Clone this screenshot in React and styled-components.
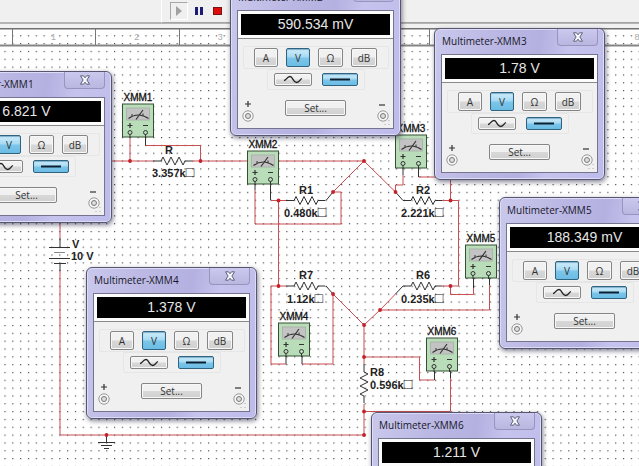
import React from "react";
import styled, { createGlobalStyle, css } from "styled-components";

const GlobalStyle = createGlobalStyle`
  * { box-sizing: border-box; }
  body { margin: 0; font-family: "Open Sans", "Noto Sans", sans-serif; background: #fff; }
`;

const Page = styled.div`
  position: relative;
  display: flex;
  flex-direction: column;
  height: 100vh;
  overflow: hidden;
`;

const Toolbar = styled.header`
  display: flex;
  height: 28px;
  flex: none;
  padding-left: 161px;
  background: linear-gradient(#f0f0f0 22px, #b4b4b4 22px, #b4b4b4 24px, #f1f1f1 24px);
`;

const RunControls = styled.div`
  display: flex;
  flex: 1;
  align-items: flex-start;
  gap: 4px;
  height: 23px;
  padding: 2px 8px;
  border-left: 1px solid #fff;
  border-bottom: 1px solid #a5a5a5;
`;

const ToolButton = styled.button`
  display: grid;
  place-items: center;
  width: ${(p) => (p.$wide ? 18 : 14)}px;
  height: 18px;
  padding: 0;
  border: 1px solid transparent;
  background: none;
  ${(p) => p.$wide && css`border-color: #a8a8a8 #fff #fff #a8a8a8;`}
`;

const Sheet = styled.main`
  position: relative;
  flex: 1;
  min-height: 0;
`;

const Drawing = styled.svg`
  display: block;
  width: 100%;
  height: 100%;
  font-family: "Liberation Sans", Arial, sans-serif;
`;

const ValueText = styled.text`
  font-size: 11px;
  font-weight: 700;
  fill: #222;
`;

const UnitBox = styled.tspan`
  font-size: 14px;
  font-weight: 400;
`;

const InstrumentText = styled.text`
  font-size: 10px;
  fill: #111;
  stroke: #111;
  stroke-width: 0.3;
`;

const RulerText = styled.text`
  font-size: 9px;
  fill: #aaa;
  text-anchor: middle;
`;

const Window = styled.section`
  position: absolute;
  left: ${(p) => p.$x}px;
  top: ${(p) => p.$y}px;
  width: 171px;
  padding: 0 6px 6px;
  border: 1px solid #565670;
  border-radius: 6px;
  background: linear-gradient(100deg, #c9c8ec 0%, #bcb8e4 30%, #b4b0e0 55%, #c6c3ee 70%, #bdbbea 100%);
  box-shadow: inset 0 0 0 1px #dcdcf6, 1px 2px 5px rgba(30, 30, 60, 0.55);
`;

const TitleBar = styled.header`
  display: flex;
  justify-content: space-between;
  height: 25px;
`;

const Title = styled.h2`
  margin: 0;
  padding: 4px 0 0 1px;
  font-size: 10px;
  line-height: 16px;
  font-weight: 400;
  color: #181828;
  white-space: nowrap;
`;

const CloseButton = styled.button`
  display: grid;
  place-items: center;
  width: 41px;
  height: 17px;
  padding: 0;
  border: 1px solid #9794bd;
  border-top: 0;
  border-radius: 0 0 4px 4px;
  background: linear-gradient(#cbc9ee, #b9b6e0);
`;

const Panel = styled.div`
  border: 1px solid #74748e;
  background: #f0f0f0;
`;

const Readout = styled.output`
  display: block;
  border: 3px solid #fcfcfc;
  box-shadow: 0 1px #8a8a8a;
  background: #000;
  color: #e6e6e6;
  font: 14px/21px "Liberation Sans", Arial, sans-serif;
  text-align: center;
`;

const Group = styled.div`
  display: flex;
  width: ${(p) => p.$width}px;
  height: ${(p) => p.$height}px;
  margin: ${(p) => p.$top}px auto 0;
  align-items: center;
  justify-content: center;
  gap: ${(p) => p.$gap}px;
  border: 1px solid #e6e6e6;
  border-radius: 2px;
`;

const Push = styled.button`
  display: grid;
  place-items: center;
  width: ${(p) => p.$width}px;
  height: ${(p) => p.$height}px;
  padding: 0;
  border: 1px solid #858585;
  border-radius: 2px;
  box-shadow: inset 0 0 0 1px #f8f8f8;
  background: linear-gradient(#f1f1f1 48%, #d8d8d8 52%, #d0d0d0);
  color: #333;
  font: 10px/12px "Open Sans", "Noto Sans", sans-serif;
  ${(p) =>
    p.$on &&
    css`
      border-color: #2f6380;
      box-shadow: inset 0 1px 1px #7eb0cb;
      background: linear-gradient(#d0ecfa, #a5daf3 48%, #7cc6ea 52%, #6bbce4);
    `}
`;

const Footer = styled.footer`
  display: flex;
  justify-content: space-between;
  align-items: flex-start;
  height: 38px;
  padding: 8px 3px 0;
`;

const SetSlot = styled.div`
  padding-top: 2px;
`;

const Jack = styled.svg`
  display: block;
  width: 14px;
  height: 28px;
`;

const READINGS = [
  { id: 1, x: -59, y: 71, value: "6.821 V" },
  { id: 2, x: 230, y: -16, value: "590.534 mV" },
  { id: 3, x: 434, y: 28, value: "1.78 V" },
  { id: 4, x: 86, y: 267, value: "1.378 V" },
  { id: 5, x: 499, y: 197, value: "188.349 mV" },
  { id: 6, x: 371, y: 412, value: "1.211 V" },
];

function Terminal({ sign }) {
  return (
    <Jack viewBox="0 0 14 28" aria-label={sign === "+" ? "Positive" : "Negative"}>
      <path d={sign === "+" ? "M4 6h6M7 3v6" : "M3 7h6"} stroke="#333" strokeWidth="1.2" />
      <circle cx="7" cy="18" r="5.2" fill="#f6f6f6" stroke="#999" />
      <circle cx="7" cy="18" r="2.5" fill="#ddd" stroke="#777" />
      {sign === "-" && <path d="M13 22v1M13 26v1M9 26v1" stroke="#aaa" />}
    </Jack>
  );
}

function Multimeter({ id, x, y, value }) {
  return (
    <Window $x={x} $y={y} aria-label={`Multimeter-XMM${id}`}>
      <TitleBar>
        <Title>Multimeter-XMM{id}</Title>
        <CloseButton aria-label="Close">
          <svg width="12" height="10" viewBox="0 0 12 10">
            <path d="M1.5 .8h3L6 2.8 7.500 .8h3L7.900 5l2.600 4.200h-3L6 7.200 4.500 9.200h-3L4.100 5z" fill="#f7f7ff" stroke="#606078" />
          </svg>
        </CloseButton>
      </TitleBar>
      <Panel>
        <Readout>{value}</Readout>
        <Group $width={146} $height={23} $top={8} $gap={8}>
          <Push $width={24} $height={19}>A</Push>
          <Push $width={24} $height={19} $on aria-pressed="true">V</Push>
          <Push $width={25} $height={19}>Ω</Push>
          <Push $width={26} $height={19}>dB</Push>
        </Group>
        <Group $width={98} $height={21} $top={0} $gap={10}>
          <Push $width={38} $height={13} aria-label="AC">
            <svg width="20" height="9" viewBox="0 0 20 9">
              <path d="M1 5.500C3 5.500 4 1.500 7 1.500S10 7.500 13.500 7.500 16.500 4.500 19 3.500" fill="none" stroke="#222" strokeWidth="1.300" />
            </svg>
          </Push>
          <Push $width={36} $height={13} $on aria-label="DC" aria-pressed="true">
            <svg width="20" height="5" viewBox="0 0 20 5">
              <path d="M0 2.500h20" stroke="#0c2030" strokeWidth="2" />
            </svg>
          </Push>
        </Group>
        <Footer>
          <Terminal sign="+" />
          <SetSlot>
            <Push $width={61} $height={16}>Set...</Push>
          </SetSlot>
          <Terminal sign="-" />
        </Footer>
      </Panel>
    </Window>
  );
}

const PITCH = 7.83;
const TICK = 83.35;

const METERS = [
  [122.5, 104], [247.5, 151], [395.5, 135], [278.5, 323], [465.5, 245], [426.5, 338],
];

const WIRES = [
  "M112 161H153M192 161H364L333 192",
  "M130 138V161M145.500 145.500H200.500V161",
  "M333 192H341V224H255V190M270.500 200.500H286M278.500 200.500V286",
  "M286 286H271V364H286M302 364H333V294L364 325",
  "M364 161L395.500 192V185H403V175M418.500 177H450.500V200.500",
  "M442 200.500H458.500V286H442M450.500 286V294.500H473.500V288M489.500 285V310H380L364 325V364",
  "M380 310L395.500 294M364 357H419.500V380H434.500M364 404V435H60V271M364 411.500H450.500V378",
  "M60 218V238",
];

const LEADS = [
  "M145.500 134V145.500M255 182V190M270.500 182V200M286 354V364M302 354V364",
  "M403 166V175M418.500 166V177M473.500 276V288M489.500 276V285M434.500 369V380M450.500 369V378",
  "M326 200.500L333 192M326 286L333 294M395.500 192L403 200.500M403 286L395.500 294",
  "M60 238V247M60 264V271M49 247.500H70M49 258.500H70M54 263.500H66",
  "M106.500 435V442M98 442.500H115M101 445.500H112M104 448.500H109",
];

const NODES = [
  [130, 161], [200.5, 161], [364, 161], [333, 192], [278.5, 200.5], [395.5, 192],
  [450.5, 200.5], [450.5, 286], [278.5, 286], [333, 294], [364, 325], [380, 310],
  [364, 357], [364, 411.5], [364, 435], [106.5, 435],
];

const RESISTORS = [
  [153, 161], [286, 200.5], [403, 200.5], [286, 286], [403, 286], [364, 364, true],
];

const LABELS = [
  [165, 154, "R"], [152, 177, "3.357k", true],
  [299, 194, "R1"], [284, 217, "0.480k", true],
  [416, 194, "R2"], [401, 217, "2.221k", true],
  [299, 279, "R7"], [287, 303, "1.12k", true],
  [416, 279, "R6"], [401, 303, "0.235k", true],
  [370, 376, "R8"], [370, 389, "0.596k", true],
  [72, 248, "V"], [71, 260, "10 V"],
];

function MeterSymbol({ x, y, id }) {
  return (
    <g>
      <InstrumentText x={x + 1} y={y - 3}>XMM{id}</InstrumentText>
      <g transform={`translate(${x} ${y})`} fill="none" stroke="#333">
        <rect x="0" y="0" width="31" height="33" fill="#b9dcb9" stroke="#345034" />
        <rect x="4" y="4" width="23" height="12" fill="#c3c3c3" stroke="#aab4aa" />
        <path d="M6 14.500Q15.500 7.500 26 14.500M13.500 15.500L20.500 6" strokeWidth="1.200" />
        <path d="M9.500 10v2M20.500 9.500v3" />
        <path d="M5 21.500h5M7.500 19v5M20.500 21.500h5" strokeWidth="1.200" />
        <circle cx="7.500" cy="28.500" r="2" />
        <circle cx="23" cy="28.500" r="2" />
        <path d="M7.500 30.500V34M23 30.500V34" />
      </g>
    </g>
  );
}

function Schematic() {
  return (
    <Drawing role="img" aria-label="Resistor bridge circuit with six multimeters">
      <defs>
        <pattern id="grid" x="4.400" y="3.900" width={PITCH} height={PITCH} patternUnits="userSpaceOnUse">
          <rect width="1.200" height="1.200" fill="#4c4c4c" />
        </pattern>
      </defs>
      <g transform="translate(0 -28)">
        <rect y="28" width="100%" height="100%" fill="url(#grid)" />
        <path d="M0 28.500H4000" stroke="#727272" strokeWidth="2" />
        <path d="M0 45.500H4000" stroke="#858585" strokeWidth="2" />
        {Array.from({ length: 8 }, (_, i) => (
          <g key={i}>
            <path d={`M${Math.round(12 + i * TICK) + 0.5} 29V45`} stroke="#777" />
            <RulerText x={53.5 + i * TICK} y="40">{i + 1}</RulerText>
          </g>
        ))}
        <g fill="none" stroke="#c94f52">
          {WIRES.map((d) => <path key={d} d={d} />)}
        </g>
        <g fill="none" stroke="#333">
          {LEADS.map((d) => <path key={d} d={d} />)}
          <path d="M54 252.500H65" stroke="#888" />
          {RESISTORS.map(([x, y, upright]) => (
            <path
              key={`${x}-${y}`}
              transform={`translate(${x} ${y})${upright ? " rotate(90)" : ""}`}
              d="M0 0H8L10 -4L14 4L18 -4L22 4L26 -4L30 4L32 0H39"
            />
          ))}
        </g>
        {METERS.map(([x, y], i) => <MeterSymbol key={i} x={x} y={y} id={i + 1} />)}
        {NODES.map(([x, y]) => <circle key={`${x}-${y}`} cx={x} cy={y} r="1.900" fill="#c3222b" />)}
        {LABELS.map(([x, y, text, unit]) => (
          <ValueText key={`${x}-${y}`} x={x} y={y}>
            {text}
            {unit && <UnitBox>□</UnitBox>}
          </ValueText>
        ))}
      </g>
    </Drawing>
  );
}

export default function App() {
  return (
    <Page>
      <GlobalStyle />
      <Toolbar>
        <RunControls role="toolbar" aria-label="Simulation">
          <ToolButton $wide aria-label="Run">
            <svg width="8" height="12" viewBox="0 0 8 12"><path d="M1 1L7 6L1 11z" fill="#a2a2a2" /></svg>
          </ToolButton>
          <ToolButton aria-label="Pause">
            <svg width="8" height="8" viewBox="0 0 8 8"><path d="M0 0h3v8H0zM5 0h3v8H5z" fill="#1c1c78" /></svg>
          </ToolButton>
          <ToolButton aria-label="Stop">
            <svg width="9" height="8" viewBox="0 0 9 8"><rect x=".5" y=".5" width="8" height="7" fill="#e00b0b" stroke="#7c1212" /></svg>
          </ToolButton>
        </RunControls>
      </Toolbar>
      <Sheet>
        <Schematic />
      </Sheet>
      {READINGS.map((meter) => <Multimeter key={meter.id} {...meter} />)}
    </Page>
  );
}
